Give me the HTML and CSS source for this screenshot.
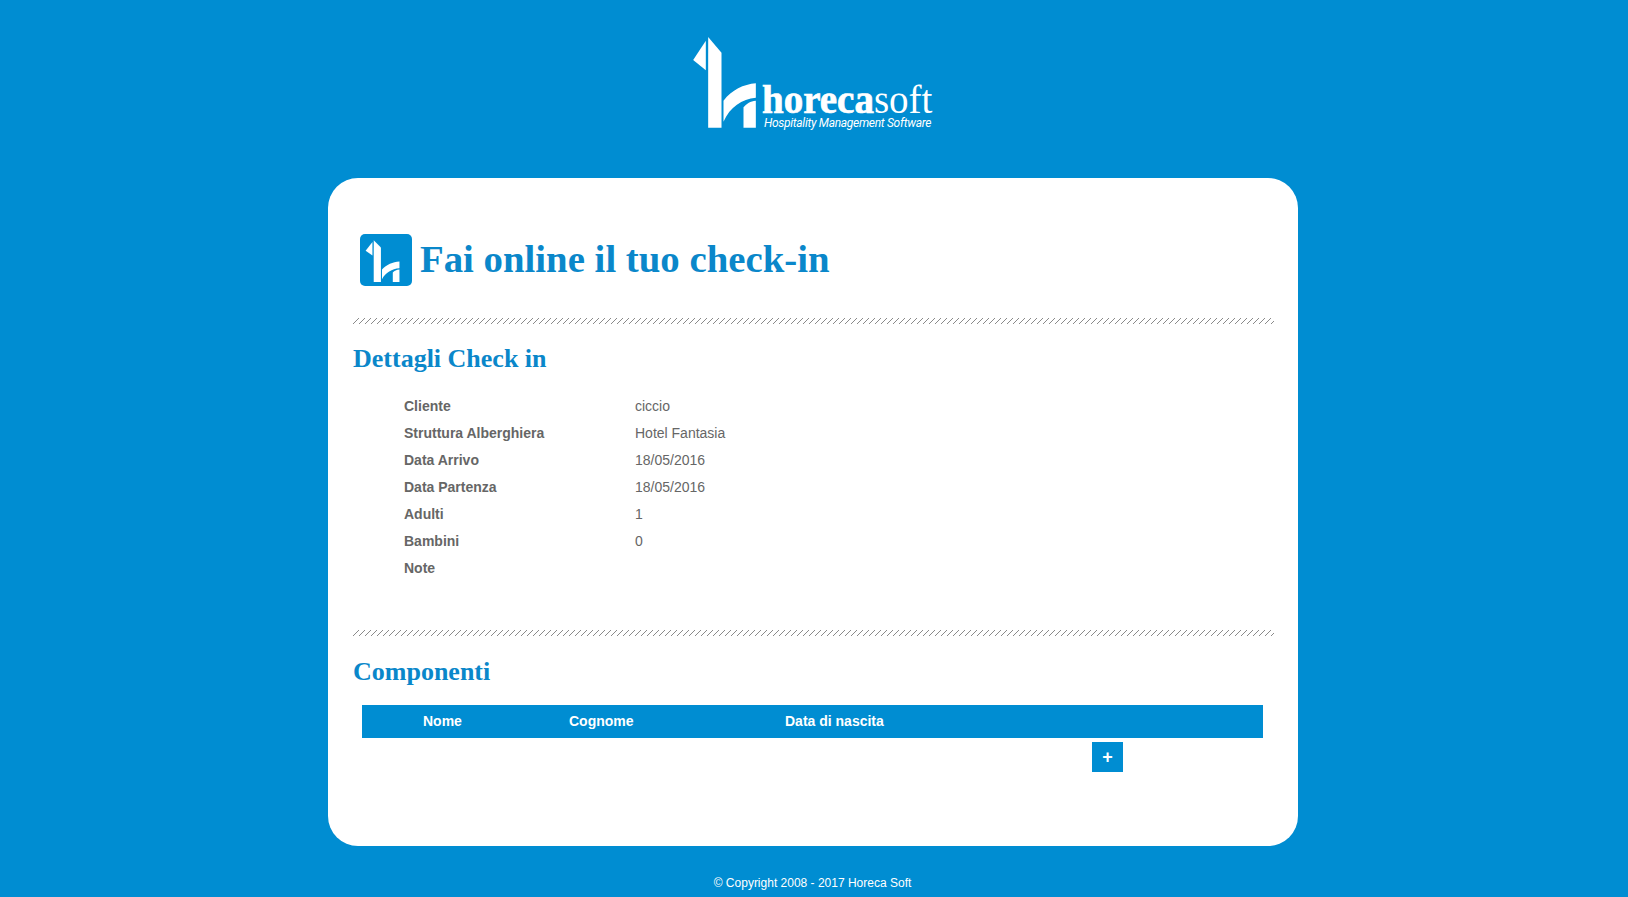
FILE: index.html
```html
<!DOCTYPE html>
<html lang="it">
<head>
  <meta charset="UTF-8" />
  <title>Fai online il tuo check-in — Horeca Soft</title>
  <link rel="stylesheet" href="styles.css">
</head>
<body>

<header class="top">
  <div class="logo">
    <svg class="logo-mark" viewBox="0 0 200 300" aria-hidden="true">
      <path d="M47 32 L9 90 L47 121 Z" />
      <path d="M54 21 L94 68 V293 H54 Z" />
      <path d="M100 212 C125 180 160 163 197 160 V203 C155 207 120 230 100 275 Z" />
      <path d="M160 293 V232 C170 220 180 214 197 212 V293 Z" />
    </svg>
    <div class="logo-text">
      <div class="logo-name"><b>horeca</b>soft</div>
      <div class="logo-tag">Hospitality Management Software</div>
    </div>
  </div>
</header>

<main class="card">
  <div class="title-row">
    <div class="title-icon">
      <svg viewBox="0 0 200 300" preserveAspectRatio="none" aria-hidden="true">
        <path d="M47 32 L9 90 L47 121 Z" />
        <path d="M54 21 L94 68 V293 H54 Z" />
        <path d="M100 212 C125 180 160 163 197 160 V203 C155 207 120 230 100 275 Z" />
        <path d="M160 293 V232 C170 220 180 214 197 212 V293 Z" />
      </svg>
    </div>
    <h1>Fai online il tuo check-in</h1>
  </div>

  <div class="divider"></div>

  <section class="details">
    <h2>Dettagli Check in</h2>
    <div class="rows">
      <div class="row"><strong>Cliente</strong><span>ciccio</span></div>
      <div class="row"><strong>Struttura Alberghiera</strong><span>Hotel Fantasia</span></div>
      <div class="row"><strong>Data Arrivo</strong><span>18/05/2016</span></div>
      <div class="row"><strong>Data Partenza</strong><span>18/05/2016</span></div>
      <div class="row"><strong>Adulti</strong><span>1</span></div>
      <div class="row"><strong>Bambini</strong><span>0</span></div>
      <div class="row"><strong>Note</strong><span></span></div>
    </div>
  </section>

  <div class="divider"></div>

  <section class="people">
    <h2>Componenti</h2>
    <div class="table-head">
      <span class="col-name">Nome</span>
      <span class="col-surname">Cognome</span>
      <span class="col-birth">Data di nascita</span>
    </div>
    <div class="table-actions">
      <button class="add-btn" type="button">+</button>
    </div>
  </section>
</main>

<footer>© Copyright 2008 - 2017 Horeca Soft</footer>

</body>
</html>
```

FILE: styles.css
```css
* { box-sizing: border-box; }
html, body { height: 100%; }
body {
  margin: 0;
  background: #008dd2;
  color: #666;
  font-family: 'Liberation Sans', Arial, sans-serif;
  font-size: 14px;
  overflow: hidden;
}

.top {
  height: 178px;
  padding-top: 30px;
}
.logo {
  width: 250px;
  margin-left: 690px;
  display: flex;
  align-items: flex-end;
  color: #fff;
}
.logo-mark {
  width: 67px;
  height: 100px;
  fill: #fff;
  flex: none;
}
.logo-text {
  margin-left: 5px;
  margin-bottom: -1px;
}
.logo-name {
  font-family: 'Liberation Serif', serif;
  font-size: 39px;
  line-height: 34px;
  white-space: nowrap;
}
.logo-name b {
  -webkit-text-stroke: 0.7px #fff;
}
.logo-tag {
  margin-top: -1px;
  padding: 0 0 1px 2px;
  font-family: Roboto, sans-serif;
  font-style: italic;
  font-size: 12px;
  letter-spacing: -0.3px;
  line-height: 14px;
  white-space: nowrap;
}

.card {
  width: 970px;
  height: 668px;
  margin-left: 328px;
  padding: 56px 24px 0 25px;
  background: #fff;
  border-radius: 30px;
}
.title-row {
  display: flex;
  align-items: center;
  padding-left: 7px;
  height: 52px;
}
.title-icon {
  width: 52px;
  height: 52px;
  padding: 3px 0 0 4px;
  background: #008dd2;
  border-radius: 5px;
  flex: none;
}
.title-icon svg {
  display: block;
  width: 36px;
  height: 46px;
  fill: #fff;
}
h1 {
  margin: 0 0 3px 8px;
  color: #0a87ca;
  font-family: 'Liberation Serif', serif;
  font-size: 38.8px;
  font-weight: bold;
  line-height: 52px;
}
h2 {
  margin: 0;
  color: #0a87ca;
  font-family: 'Liberation Serif', serif;
  font-size: 26px;
  font-weight: bold;
  line-height: 30px;
}

.divider {
  height: 6px;
  background-image: linear-gradient(135deg, transparent 42%, #8a8a8a 42%, #8a8a8a 58%, transparent 58%);
  background-size: 6px 6px;
}
.title-row + .divider { margin-top: 32px; }

.details { padding-top: 20px; height: 306px; }
.rows { padding: 19px 0 0 51px; }
.row {
  display: flex;
  height: 27px;
  line-height: 27px;
}
.row strong { width: 231px; flex: none; }

.people { padding-top: 21px; }
.table-head {
  display: flex;
  height: 33px;
  line-height: 32px;
  margin: 18px 11px 0 9px;
  background: #008dd2;
  color: #fff;
  font-weight: bold;
}
.col-name { width: 207px; padding-left: 61px; }
.col-surname { width: 216px; }
.table-actions {
  display: flex;
  padding: 4px 0 0 739px;
}
.add-btn {
  width: 31px;
  height: 30px;
  padding: 0;
  border: none;
  background: #008dd2;
  color: #fff;
  font-family: 'Liberation Sans', Arial, sans-serif;
  font-size: 18px;
  font-weight: bold;
}

footer {
  padding: 30px 3px 0 0;
  text-align: center;
  color: #fff;
  font-size: 12px;
  line-height: 14px;
}
```
